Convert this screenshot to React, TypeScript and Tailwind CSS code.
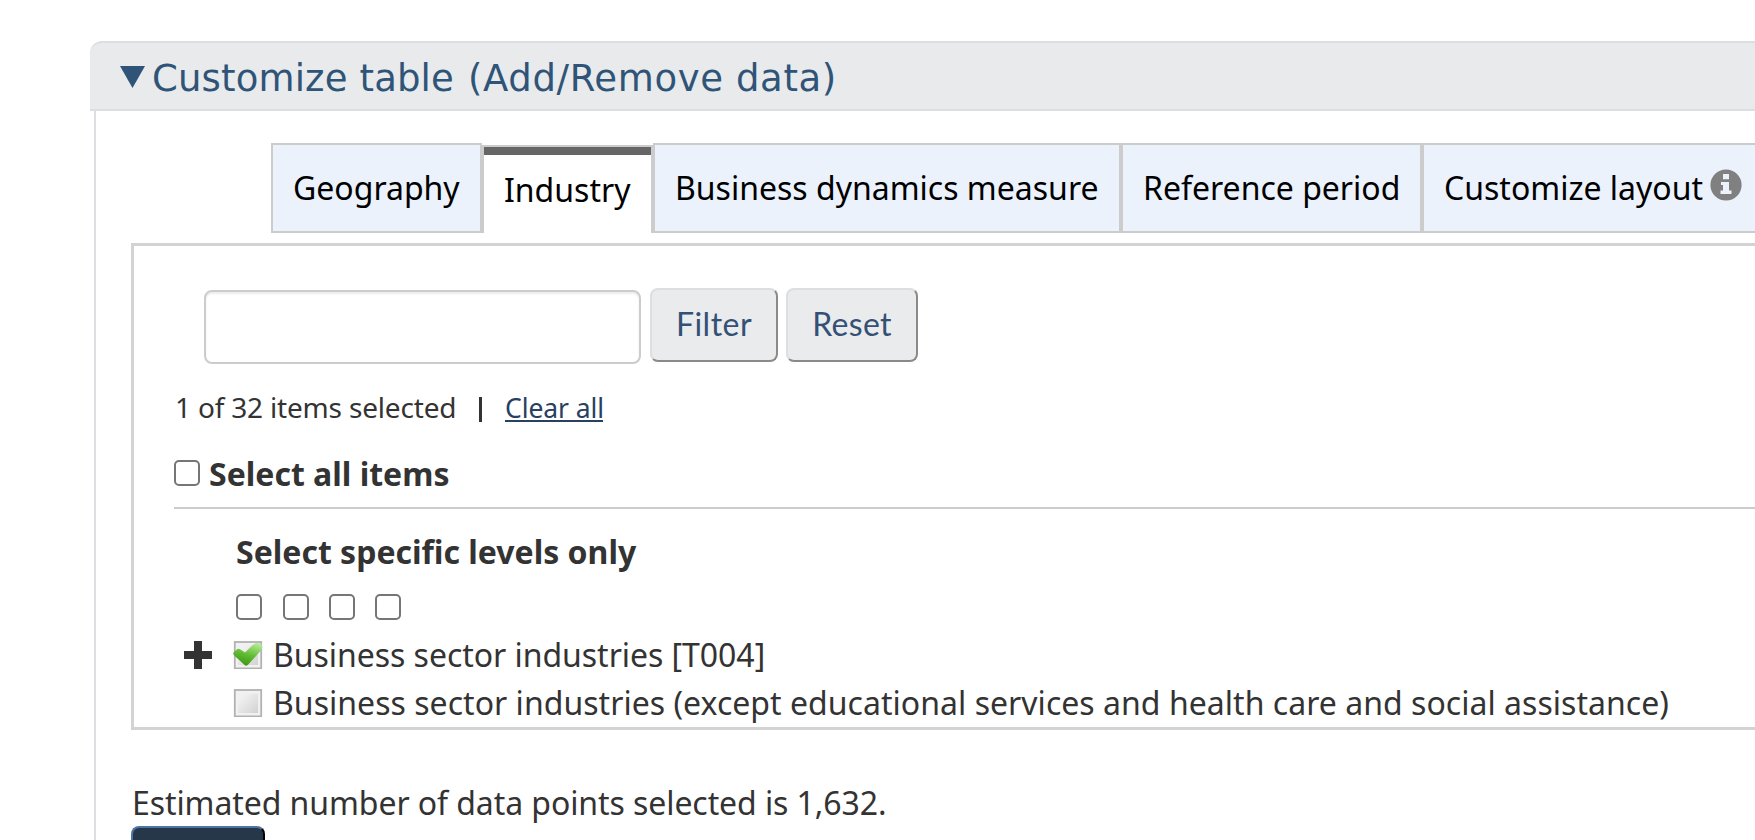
import React from "react";

const tabs = [
  { label: "Geography", width: "w-[211px]" },
  { label: "Industry", width: "w-[171px]", active: true },
  { label: "Business dynamics measure", width: "w-[468px]" },
  { label: "Reference period", width: "w-[301px]" },
  { label: "Customize layout", width: "w-[345px]", info: true },
];

function InfoIcon() {
  return (
    <svg viewBox="0 0 32 32" className="ml-[7px] mb-[7px] h-8 w-8 shrink-0">
      <circle cx="16" cy="16" r="15.6" fill="#808080" />
      <path fill="#ebf2fc" d="M13 5h6v5.2h-6zM11 13h8v8.600h2.500v3.400H10.500v-3.400H13V16h-2z" />
    </svg>
  );
}

function Box({ className = "" }: { className?: string }) {
  return (
    <input
      type="checkbox"
      className={`block h-[26px] w-[26px] shrink-0 appearance-none rounded-[5px] border-2 border-[#767676] bg-white ${className}`}
    />
  );
}

function TreeBox({ checked = false, id }: { checked?: boolean; id: string }) {
  return (
    <svg viewBox="0 0 30 28" className="h-7 w-[30px] shrink-0">
      <defs>
        <linearGradient id={`${id}-bg`} x1="0" y1="0" x2="1" y2="1">
          <stop offset="0.2" stopColor="#f0f0f0" />
          <stop offset="1" stopColor="#d2d2d2" />
        </linearGradient>
        <linearGradient id={`${id}-tick`} x1="0.7" y1="0" x2="0.3" y2="1">
          <stop offset="0" stopColor="#b4e896" />
          <stop offset="0.5" stopColor="#62bd34" />
          <stop offset="1" stopColor="#3f9412" />
        </linearGradient>
      </defs>
      <rect x="1.800" y="1" width="26.400" height="26.400" fill="#f1f1f1" stroke="#b2b2b2" strokeWidth="1.800" />
      <rect x="5" y="4.500" width="20" height="19.500" fill={`url(#${id}-bg)`} />
      {checked && (
        <path
          d="M.3 13Q0 12 1 11L4.500 8q1.500-.8 2.600.3L12 11.500 20 3.800q3-2.500 7-1.300 3 1 2.300 4Q29 8.500 27 10.500L15 23.800q-2 1.800-3.700 0L2 15.200Q.8 14 .3 13z"
          fill={`url(#${id}-tick)`}
        />
      )}
    </svg>
  );
}

export default function App() {
  return (
    <div className="h-[840px] w-full overflow-hidden bg-white pl-[90px] pt-[41px] font-['Noto_Sans',sans-serif] text-[32px] text-[#333]">
      <header className="flex h-[70px] items-center rounded-tl-[12px] border-y-2 border-[#dcdee1] bg-[#e8eaeb] pl-[30px] text-[#2f5478]">
        <svg viewBox="0 0 25 22" className="mt-px h-[22px] w-[25px]">
          <path d="M0 0h25L12.500 22z" fill="currentColor" />
        </svg>
        <h2 className="ml-[7px] flex whitespace-nowrap pt-1.5 font-['DejaVu_Sans',sans-serif] text-[37px] leading-[50px]">
          <span className="w-[316px] tracking-[0.15px]">Customize table </span>
          <span className="tracking-[0.63px]">(Add/Remove data)</span>
        </h2>
      </header>

      <main className="ml-1 h-[729px] border-l-2 border-[#dcdee1] pl-[35px] pt-8">
        <nav className="flex h-[90px] w-[1800px] items-end pl-[140px] text-black">
          {tabs.map((t) => (
            <button
              key={t.label}
              className={`flex shrink-0 items-center whitespace-nowrap pl-5 leading-[44px] ${t.width} ${
                t.active
                  ? "h-[88px] border-2 border-b-0 border-[#ccc] bg-white shadow-[inset_0_8px_0_#666]"
                  : "h-[90px] border-2 border-[#ccc] bg-[#ebf2fc]"
              }`}
            >
              {t.label}
              {t.info && <InfoIcon />}
            </button>
          ))}
        </nav>

        <section className="mt-2.5 h-[487px] w-[1800px] overflow-hidden border-[3px] border-[#d3d3d3]">
          <div className="flex pl-[70px] pt-[42px]">
            <input
              type="text"
              className="mt-0.5 h-[74px] w-[437px] rounded-[8px] border-2 border-[#ccc] shadow-[inset_0_2px_2px_rgba(0,0,0,0.075)]"
            />
            <button className="ml-[9px] h-[74px] w-32 rounded-[8px] border-2 border-[#dcdee1] border-b-[#8a8a8a] border-r-[#8a8a8a] bg-[#eaebed] pb-0.5 font-['Lato',sans-serif] tracking-[0.5px] text-[#335075]">
              Filter
            </button>
            <button className="ml-2 h-[74px] w-[132px] rounded-[8px] border-2 border-[#dcdee1] border-b-[#8a8a8a] border-r-[#8a8a8a] bg-[#eaebed] pb-0.5 font-['Lato',sans-serif] tracking-[0.3px] text-[#335075]">
              Reset
            </button>
          </div>

          <div className="mt-[26px] flex h-[34px] pl-[41px] text-[28px] leading-[34px] tracking-[-0.18px]">
            <span className="h-[28px] w-[304px] overflow-hidden whitespace-nowrap">1 of 32 items selected</span>
            <span className="mt-[7px] h-[25px] w-[3px] bg-[#333]" />
            <span className="ml-[23px] mt-px w-[98px] whitespace-nowrap text-[26.5px] tracking-[-0.1px] text-[#284162]">
              <span className="block h-[27px] w-[104px] overflow-hidden">Clear all</span>
              <span className="mt-0.5 block h-0.5 bg-[#284162]" />
            </span>
          </div>

          <div className="ml-10 flex h-[85px] items-end border-b-2 border-[#ccc] pb-[21px] font-bold leading-[44px]">
            <Box />
            <span className="-mb-[10px] ml-[9px]">Select all items</span>
          </div>

          <div className="pl-[102px] pt-[21px]">
            <div className="font-bold leading-[44px]">Select specific levels only</div>
            <div className="mt-5 flex">
              <Box />
              <Box className="ml-[21px]" />
              <Box className="ml-5" />
              <Box className="ml-5" />
            </div>
          </div>

          <ul className="mt-[11px] pl-[50px] leading-[48px]">
            <li className="flex h-12 items-center whitespace-nowrap">
              <svg viewBox="0 0 28 28" className="h-7 w-7 shrink-0">
                <path d="M10 0h8v10h10v8H18v10h-8V18H0v-8h10z" fill="#333" />
              </svg>
              <span className="ml-[21px] mr-[10px] flex">
                <TreeBox id="all" checked />
              </span>
              <span className="tracking-[-0.04px]">Business sector industries [T004]</span>
            </li>
            <li className="flex h-12 items-center whitespace-nowrap pl-[49px]">
              <span className="mr-[10px] flex">
                <TreeBox id="except" />
              </span>
              <span className="tracking-[0.03px]">
                Business sector industries (except educational services and health care and social assistance)
              </span>
            </li>
          </ul>
        </section>

        <p className="mt-[50px] h-[46px] pl-px leading-[46px] tracking-[-0.08px]">
          Estimated number of data points selected is 1,632.
        </p>
        <button className="block h-[74px] w-[134px] rounded-[8px] border-2 border-b-black border-l-[#4f74a3] border-r-black border-t-[#4f74a3] bg-[#26374a]" aria-label="Apply" />
      </main>
    </div>
  );
}
